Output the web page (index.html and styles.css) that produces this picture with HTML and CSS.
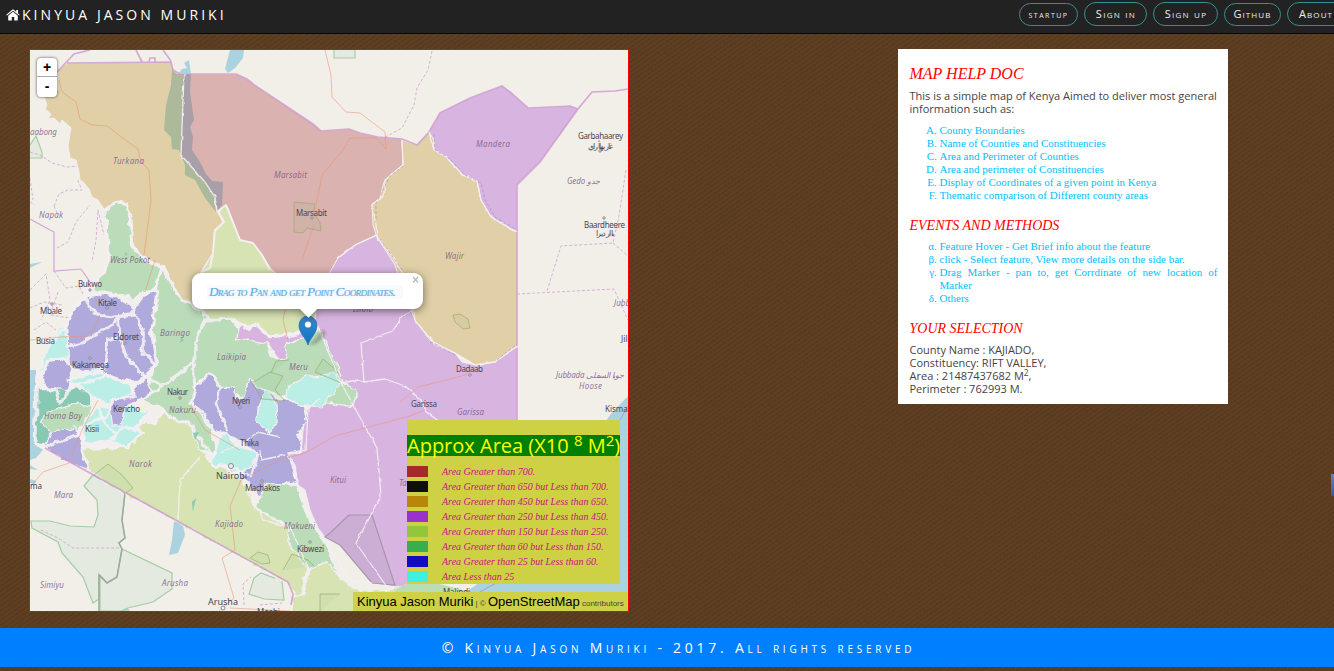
FILE: index.html
```html
<!DOCTYPE html>
<html lang="en">
<head>
<meta charset="utf-8">
<title>Kinyua Jason Muriki</title>
<link rel="stylesheet" href="styles.css">
</head>
<body>
<header class="navbar">
  <a class="brand"><svg class="home" viewBox="0 0 14 12"><path d="M7 2.8 2.2 6.8v4.1c0 .4.2.6.6.6h3V8h2.4v3.5h3c.4 0 .6-.2.6-.6V6.800z"/><path d="M13.700 5.800 12 4.400V1h-1.800v1.800L7.800.8c-.5-.4-1.100-.4-1.600 0L.3 5.800l.6.8L7 1.700l6.100 4.900z"/></svg><span>KINYUA JASON MURIKI</span></a>
  <nav class="links">
    <a class="pill startup">startup</a><a class="pill signin">Sign in</a><a class="pill signup">Sign up</a><a class="pill github">Github</a><a class="pill about">About</a>
  </nav>
</header>
<main class="content">
  <section class="map">
    <svg class="tiles" viewBox="30 50 598 561">
      <defs>
        <filter id="rough" x="-5%" y="-5%" width="110%" height="110%"><feTurbulence type="fractalNoise" baseFrequency=".11" numOctaves="3" seed="4" result="n"/><feDisplacementMap in="SourceGraphic" in2="n" scale="7" xChannelSelector="R" yChannelSelector="G"/></filter>
        <filter id="rough-line" x="-5%" y="-5%" width="110%" height="110%"><feTurbulence type="fractalNoise" baseFrequency=".14" numOctaves="2" seed="7" result="n"/><feDisplacementMap in="SourceGraphic" in2="n" scale="3" xChannelSelector="R" yChannelSelector="G"/></filter>
      </defs>
      <rect class="land" x="30" y="50" width="598" height="561"/>
      <!-- water and protected areas -->
      <g class="water">
        <path d="M179 73 182 69 187 68 184 63 189 60 191 74z M225 69 230 50H244L243 58 235 68 228 73z"/>
        <path d="M628 396 610 415 600 430 560 500 490 575 455 600 455 611H628z"/>
        <path d="M30 370 36 370 36 445 43 450 36 458 30 460z M30 264 42 262 30 268z M174 521 183 525 185 535 178 553 169 555 172 540z M30 479 36 481 35 484 30 483z M30 465 38 470 30 469z M122 611 126 606 130 611z"/>
      </g>
      <g class="reserve">
        <path d="M334 50V58H355V50"/><path d="M30 158H42V152L36 136 30 145"/>
        <path d="M93 475 84 486 97 500 98 515 94 527 70 526 50 521 31 521 32 528 58 542 62 553 83 577 93 603 99 599 99 575 107 583 117 577 122 549 119 543 125 538 122 520 125 493z"/>
        <path d="M122 549 172 573 172 589 153 602 128 608 121 611H100V575L107 583 117 577z"/>
        <path d="M254 578 261 573 282 581 284 600 264 599 249 594z"/>
        <path class="ridge" d="M125 493 122 520 125 538 119 543 122 549 117 577 107 583 99 575V611"/>
      </g>
      <!-- boundaries outside the country -->
      <g class="admin">
        <path d="M30 202 35 205M30 152 42 156 52 163 67 167 79 166M86 167 78 181 82 190 68 190 59 194 54 206M30 178 33 200M98 210 104 235M54 206 58 215M432 51 428 70 417 88 414 105 402 128 380 140M626 170 619 216 613 243 561 246 547 291M517 294 614 289 628 320M613 243 628 256"/>
        <path d="M57 248 68 242 76 222 90 205M98 212 96 240 92 262M30 290 46 274 50 300 41 320M54 271 66 288 79 286 87 302M58 292 50 315 70 318M30 308 44 302 62 305M34 330 46 322 56 330M41 530 58 538 73 548 122 548M244 605 243 584 251 577M260 605 282 603"/>
      </g>
      <path class="solid-admin" d="M30 219 54 232V271L81 269 90 282"/>
      <path class="coastline" d="M628 406 620 420M480 592 505 578"/>
      <!-- counties -->
      <g class="county">
        <path class="tan" d="M58 70 67 63 171 62 173 70 177 73 184 74 181 155 205 182 214 197 217 211 223 222 215 233 213 253 202 270 200 290 205 312 190 303 182 300 162 267 143 258 132 243 130 217 126 204 121 200 112 207 104 209 98 200 92 197 89 189 83 182 80 180 79 172 76 160 70 158 68 145 71 128 69 126 62 120 60 124 54 118 48 119 51 114 45 109 47 105 44 96 58 90z"/>
        <path class="red" d="M184 74H236L247 79 253 84 313 124 321 131 349 129 360 133 378 137 402 139 403 165 392 174 386 183 384 196 372 204 377 235 355 245 338 258 325 285 280 290 270 268 262 255 253 243 240 240 227 206 218 211 214 197 205 182 181 155z"/>
        <path class="purple" d="M377 235 390 250 401 268 412 310 430 340 455 353 462 362 475 365 495 362 517 346V540L420 590 396 587 372 583 340 545 325 537 318 528 310 510 305 490 298 485 295 465 288 454 301 453 303 430 307 410 315 400 330 397 340 382 325 350 315 320 316 295 330 272 338 258 355 245z"/>
        <path class="tan" d="M429 132 434 140V150L446 157 463 175 477 181 481 200 491 217 505 225 517 232V346L495 362 475 365 462 357 455 353 430 340 415 320 405 295 395 265 377 237 373 225 372 205 380 197 384 182 390 175 403 165 402 140 417 145 419 142z"/>
        <path class="purple" d="M429 132 440 113 470 98 502 86 510 92 528 108 550 107 570 106 578 109 567 125 540 162 517 185V232L500 223 491 217 481 200 477 181 463 175 446 157 434 150V140z"/>
        <path class="lime" d="M226 205 240 240 253 243 262 255 270 268 285 282 315 290 318 300 314 323 285 337 265 335 245 325 232 318 210 320 203 310 200 275 213 253 214 233 224 222 218 213z"/>
      </g>
      <g filter="url(#rough)">
      <g class="county west" transform="translate(20 200) scale(.33333)">
        <path class="green" d="M430 200 485 300 510 305 565 355 635 358 655 390 652 415 740 425 755 470 780 475 800 430 830 420 900 385 920 430 945 480 970 548 1010 570 1000 620 850 600 800 590 740 575 690 540 670 590 610 565 600 650 575 690 590 765 540 750 500 710 470 665 430 625 370 600 390 550 410 480 395 350 405 270z"/>
        <path class="green" d="M258 30 290 5 320 15 330 50 335 130 370 175 425 205 405 265 375 275 335 305 300 285 230 275 205 265 235 240 268 175 262 120z"/>
        <path class="indigo" d="M190 300 250 280 300 295 345 325 370 290 410 270 400 340 395 400 412 480 400 500 370 530 350 545 300 535 250 520 145 505 140 380 160 330z"/>
        <path class="indigo" d="M65 530 80 485 130 475 155 520 145 570 122 615 75 570z"/>
        <path class="cyan" d="M50 530 80 440 130 375 140 430 145 470 85 485z"/>
        <path class="cyan" d="M145 540 235 505 260 530 325 550 340 580 285 600 260 610 210 580z"/>
        <path class="teal" d="M45 570 150 565 205 570 215 615 190 680 105 705 75 730 40 730z"/>
        <path class="green" d="M75 640 140 620 180 610 220 620 170 700 100 705 65 670z"/>
        <path class="indigo" d="M70 740 90 700 170 680 185 750 205 810 150 790z"/>
        <path class="cyan" d="M190 670 235 620 270 625 340 615 380 640 345 690 365 700 325 745 270 720 190 735z"/>
        <path class="indigo" d="M270 600 325 590 350 560 380 535 400 580 345 605 310 620 300 680 280 675z"/>
        <path class="lime" d="M185 750 325 740 370 695 350 670 400 670 430 630 470 665 505 665 540 750 575 790 620 810 665 835 705 925 800 980 820 1040 865 1100 845 1185 820 1180 810 1155 210 820z"/>
        <path class="indigo" d="M525 555 570 520 590 560 640 565 645 595 670 590 690 540 740 575 780 600 850 610 860 670 830 700 850 750 805 760 835 845 800 850 710 895 690 850 660 830 715 755 620 700 575 690 540 640 515 610z"/>
        <path class="cyan" d="M735 570 770 610 775 670 745 695 710 670 715 620z"/>
        <path class="cyan" d="M805 560 860 530 945 520 965 550 900 620 840 615 800 595z"/>
        <path class="cyan" d="M575 795 595 710 620 695 650 740 715 755 690 805 640 820 620 800z"/>
        <path class="green" d="M740 850 830 860 865 960 910 1010 940 1090 965 1140 1010 1170 970 1180 865 1110 800 1020 810 980 705 925z"/>
        <path class="lime" d="M820 1185 850 1185 870 1110 920 1085 970 1140 1010 1170 1100 1170 1150 1160 1210 1240H815z"/>
        <path class="purple" d="M650 415 660 375 690 385 710 375 750 410 820 405 870 385 880 400 800 430 795 475 770 475 745 430z"/>
      </g>
      <g class="outline thick" transform="translate(20 200) scale(.33333)">
        <path d="M258 60 262 120 270 175 235 240 205 275 165 315 135 385 85 440 50 530 45 730 75 740M258 30 290 5 320 15 330 50 335 130 370 175 425 200 485 300 510 305 565 355 530 410 520 485 480 520 430 560 380 530 410 495 395 400 410 275 375 275 345 300 300 285 245 275 190 290 225 340 270 350 340 340 335 305M425 205 405 270M565 360 640 358 655 380 710 375 750 410 820 405 900 385M140 440 180 430 280 375 295 350 300 410 260 420 255 510 140 540M295 350 350 345 370 390 370 460 410 500M300 420 320 470 375 530M135 470 85 480 65 530 75 565 105 570 122 612 155 560 260 530 335 550 340 590 275 600 270 640 190 680 180 700 75 740M190 680 190 735 325 740 370 700 345 685 385 640 400 670 430 630 470 665 505 665 530 705 580 770 600 700 575 690 550 640 515 610 525 560 570 520 600 560M235 620 250 670 290 700M270 720 310 680 345 690M185 750 210 815M520 490 525 570M360 600 430 560M600 560 590 610 620 690M575 795 630 800 690 830 715 760M620 810 660 830"/>
      </g>
      </g>
      <path class="outline samburu" d="M213 253 215 230 224 222 218 211 226 205 240 240 253 243 262 255 270 270M213 253 210 268 201 272"/>
      <path class="coast" d="M395 591 405 584 440 584 470 592V611H395z"/>
      <!-- Lake Turkana -->
      <path class="lake-west" d="M172 70 177 74 184 74 181 155 205 182 214 197 216 212 205 198 195 180 185 175 185 165 179 150 172 149 171 137 164 130 166 105 171 85z"/>
      <path class="lake-east" d="M184 74H191L190 92 194 120 190 127 193 137 192 150 200 162 206 174 212 181 223 182 222 205 217 211 214 195 205 182 181 155z"/>
      <path class="park" d="M325 537 330 533 349 515 372 515 395 585 372 583 340 545z"/>
      <g class="park-line">
        <path d="M294 202 315 204 314 213 320 223 321 231 307 228 303 233 294 232zM453 315 460 314 468 319 470 328 463 329 455 322zM94 475 108 464 122 475 133 488 126 493M250 558 258 552 268 555 270 563 262 564zM315 372 323 359 337 371 341 383zM252 383 270 372 283 376 275 390 285 401 262 399zM283 570 292 554 308 560 314 566M320 611V594H340M289 360 276 361 271 373"/>
      </g>
      <!-- international border and county outlines -->
      <g class="border">
        <path d="M53 76 58 71 74 54 90 50M67 63 171 62 173 70 180 74H236L247 79 253 84 313 124 321 131 349 129 360 133 378 137 402 139 417 145 429 132 440 113 470 98 502 86 510 92 528 108 550 107 570 106 578 109 587 98 592 92 615 91 628 89M578 109 540 162 517 185V420M136 50 142 62M149 62 150 58 155 58 155 62M163 50 171 61M45 448 70 462 288 582 293 594 291 605"/>
      </g>
      <g class="outline" filter="url(#rough-line)">
        <path d="M184 74 181 155 205 182 215 197 217 211"/>
        <path d="M402 141 403 165 392 174 385 180 384 196 372 205 376 225 377 237 395 260 412 290 415 320 435 345 455 353 475 365 495 362 517 346M429 132 434 150 446 157 463 175 477 181 481 200 491 217 517 232M377 235 355 245 338 258M315 320 341 383 358 380 364 382 361 343 382 335 394 330 402 316 413 311M364 382 385 379 405 386 421 400 425 411 440 422M341 383 377 448 381 496 356 543 387 587M320 398 308 409 306 450 288 453 298 485 310 520 340 565 350 582 372 583"/>
        <path d="M260 450 261 460 285 455M220 452 240 445 258 432 280 437M200 457 180 480 178 520M253 500 263 520 290 527 308 567 303 594M256 488 255 507"/>
      </g>
      <path class="dashes" d="M434 134 435 150 451 160 466 176 481 183 485 200 495 217 515 229M403 166 390 176 376 203 376 222M380 239 402 270M430 342 455 355M497 360 517 344"/>
      <g class="roads">
        <path d="M59 80 62 92 76 102 80 119 92 125 107 126 120 136 138 149 141 162 149 170 151 200 146 240 144 255M325 50 331 75 332 97 346 112 360 113 385 132 386 149 376 138 350 138 343 150 322 175 316 205M314 225 302 260M31 486 43 472 72 462M219 611 234 598 222 558 235 550 230 506 241 480 280 460 305 453M230 608 290 611M400 402 418 387 451 379 468 374M305 453 335 436 410 416 425 410M145 292 155 260M30 340 60 337 90 336 100 315M70 460 82 430 98 400M190 405 205 430 240 450M288 340 283 320 285 310"/>
      </g>
      <g class="pools"><path d="M125 252 128 254 125 256zM181 338 184 340 180 343zM193 433 199 432 195 440zM192 502 196 498 193 512z"/></g>
      <!-- place names -->
      <g class="region">
        <text x="30" y="135" textLength="27">aabong</text><text x="113" y="164" textLength="31">Turkana</text><text x="274" y="178" textLength="33">Marsabit</text><text x="39" y="218" textLength="24">Napak</text><text x="476" y="147" textLength="34">Mandera</text><text x="567" y="184" textLength="33">Gedo جدو</text><text x="445" y="259" textLength="19">Wajir</text><text x="110" y="263" textLength="40">West Pokot</text><text x="160" y="336" textLength="30">Baringo</text><text x="217" y="360" textLength="29">Laikipia</text><text x="289" y="370" textLength="19">Meru</text><text x="353" y="312" textLength="20">Isiolo</text><text x="614" y="306">Jubb</text><text x="556" y="378" textLength="68">Jubbada جوبا السفلى</text><text x="579" y="389" textLength="23">Hoose</text><text x="457" y="415" textLength="27">Garissa</text><text x="44" y="419" textLength="38">Homa Bay</text><text x="169" y="413" textLength="27">Nakuru</text><text x="129" y="467" textLength="23">Narok</text><text x="54" y="498" textLength="19">Mara</text><text x="215" y="527" textLength="28">Kajiado</text><text x="284" y="529" textLength="31">Makueni</text><text x="40" y="588" textLength="24">Simiyu</text><text x="162" y="586" textLength="26">Arusha</text><text x="330" y="483" textLength="16">Kitui</text><text x="399" y="486">Tana</text>
      </g>
      <g class="town">
        <text x="296" y="216" textLength="31">Marsabit</text><text x="578" y="139" textLength="45">Garbahaarey</text><text x="588" y="149" textLength="25">غاربهاأراي</text><text x="584" y="228" textLength="41">Baardheere</text><text x="596" y="236" textLength="18">بااردیرا</text><text x="78" y="287" textLength="24">Bukwo</text><text x="98" y="306" textLength="19">Kitale</text><text x="40" y="314" textLength="22">Mbale</text><text x="36" y="344" textLength="19">Busia</text><text x="113" y="340" textLength="26">Eldoret</text><text x="72" y="368" textLength="37">Kakamega</text><text x="167" y="395" textLength="21">Nakur</text><text x="113" y="412" textLength="27">Kericho</text><text x="85" y="432" textLength="14">Kisii</text><text x="232" y="404" textLength="18">Nyeri</text><text x="240" y="446" textLength="19">Thika</text><text class="big" x="216" y="479" textLength="31">Nairobi</text><text x="245" y="491" textLength="35">Machakos</text><text x="297" y="552" textLength="27">Kibwezi</text><text x="456" y="372" textLength="27">Dadaab</text><text x="411" y="407" textLength="26">Garissa</text><text x="605" y="412">Kismaayo</text><text x="621" y="342">Jilib</text><text x="30" y="489">ma</text><text class="big" x="208" y="605" textLength="30">Arusha</text><text x="443" y="595" textLength="27">Malindi</text><text x="257" y="615">Moshi</text>
      </g>
      <g class="dots"><circle cx="312" cy="218" r="1.200"/><circle cx="600" cy="151" r="1.200"/><circle cx="604" cy="218" r="1.200"/><circle cx="90" cy="290" r="1.200"/><circle cx="107" cy="308" r="1.200"/><circle cx="52" cy="304" r="1.200"/><circle cx="125" cy="343" r="1.200"/><circle cx="90" cy="358" r="1.200"/><circle cx="180" cy="398" r="1.200"/><circle cx="240" cy="407" r="1.200"/><circle cx="231" cy="466" r="2.500"/><circle cx="262" cy="481" r="1.200"/><circle cx="470" cy="375" r="1.200"/><circle cx="310" cy="542" r="1.200"/><circle cx="223" cy="608" r="2"/></g>
    </svg>
    <div class="zoom"><a>+</a><a>-</a></div>
    <svg class="marker" viewBox="0 0 40 34"><defs><linearGradient id="pin" x2="0" y2="1"><stop stop-color="#398dcb"/><stop offset="1" stop-color="#126fc6"/></linearGradient></defs><path class="shade" d="M11 30 24 15Q30 15 26 22L18 29z"/><path class="pin" d="M10 30C8 23 1 18 1 10.500A9 9.500 0 0 1 19 10.500C19 18 12 23 10 30z"/><circle cx="10" cy="9.500" r="3.100" fill="#fff"/></svg>
    <div class="popup"><span class="tip"></span><div class="bubble"><p>Drag to Pan and get Point Coordinates.</p><span class="close">×</span></div></div>
    <aside class="legend">
      <h2>Approx Area (X10 <sup>8</sup> M<sup>2</sup>)</h2>
      <ul>
        <li><i class="k1"></i>Area Greater than 700.</li>
        <li><i class="k2"></i>Area Greater than 650 but Less than 700.</li>
        <li><i class="k3"></i>Area Greater than 450 but Less than 650.</li>
        <li><i class="k4"></i>Area Greater than 250 but Less than 450.</li>
        <li><i class="k5"></i>Area Greater than 150 but Less than 250.</li>
        <li><i class="k6"></i>Area Greater than 60 but Less than 150.</li>
        <li><i class="k7"></i>Area Greater than 25 but Less than 60.</li>
        <li><i class="k8"></i>Area Less than 25</li>
      </ul>
    </aside>
    <div class="attribution"><a>Kinyua Jason Muriki</a> | © <a>OpenStreetMap</a> contributors</div>
  </section>
  <section class="doc">
    <h3 class="first">MAP HELP DOC</h3>
    <p>This is a simple map of Kenya Aimed to deliver most general information such as:</p>
    <ol class="alpha"><li>County Boundaries</li><li>Name of Counties and Constituencies</li><li>Area and Perimeter of Counties</li><li>Area and perimeter of Constituencies</li><li>Display of Coordinates of a given point in Kenya</li><li>Thematic comparison of Different county areas</li></ol>
    <h3>EVENTS AND METHODS</h3>
    <ol class="greek"><li>Feature Hover - Get Brief info about the feature</li><li>click - Select feature, View more details on the side bar.</li><li>Drag Marker - pan to, get Corrdinate of new location of Marker</li><li>Others</li></ol>
    <h3>YOUR SELECTION</h3>
    <p>County Name : KAJIADO,<br>Constituency: RIFT VALLEY,<br>Area : 21487437682 M<sup>2</sup>,<br>Perimeter : 762993 M.</p>
  </section>
</main>
<footer class="footer"><span>© Kinyua Jason Muriki - 2017. All rights reserved</span></footer>
<div class="side-tab"></div>
</body>
</html>
```
FILE: styles.css
```css
* { box-sizing: border-box; }
html, body { margin: 0; height: 671px; overflow: hidden; }
body {
  font-family: "Open Sans", sans-serif;
  background: repeating-linear-gradient(145deg, rgba(0,0,0,.09) 0 1px, transparent 1px 4px), #5d3e21;
}
.navbar { height: 34px; background: #222; border-bottom: 1px solid #090909; display: flex; justify-content: space-between; overflow: hidden; color: #fff; }
.brand { display: flex; align-items: center; height: 29px; padding-left: 6px; font-size: 14px; letter-spacing: 3.050px; white-space: nowrap; }
.home { width: 14px; height: 12px; fill: #fff; margin-right: 2px; }
.links { display: flex; gap: 6px; align-items: flex-start; width: 315px; padding-top: 2px; flex: none; }
.pill { flex: none; height: 24px; border: 1px solid #35918f; border-radius: 12px; font-size: 11px; line-height: 21px; font-variant: small-caps; letter-spacing: 1.300px; color: #eee; text-align: center; white-space: nowrap; padding-left: 1px; }
.startup { width: 59px; height: 23px; margin-top: 1px; font-size: 10px; letter-spacing: 1.500px; padding-left: 0; }
.signin { width: 63px; }
.signup { width: 65px; }
.github { width: 57px; height: 23px; margin-top: 1px; line-height: 19px; letter-spacing: 1.100px; padding-left: 0; }
.about { width: 66px; text-align: left; padding-left: 11px; letter-spacing: 1.100px; }
.content { display: flex; align-items: flex-start; height: 594px; padding: 15px 0 0 29px; gap: 269px; }
.map { position: relative; width: 600px; height: 563px; border: 1px solid #f00; overflow: hidden; flex: none; }
.tiles { display: block; width: 598px; height: 561px; }
.land { fill: #f2efe9; }
.water { fill: #aad3df; }
.reserve path { fill: #e4eadf; stroke: #a5cda3; stroke-width: 1.200; }
.reserve .ridge { fill: none; stroke: #9bab9b; stroke-width: 1.500; }
.admin { fill: none; stroke: #d8b0d8; stroke-width: 1; stroke-dasharray: 3 2; }
.solid-admin { fill: none; stroke: #d3a6d3; stroke-width: 1.200; }
.coastline { fill: none; stroke: #a9a0cc; }
.county path { stroke: #f2eff2; stroke-width: 1; stroke-linejoin: round; }
.west path { stroke-width: 4; }
.tan { fill: #e0cfa7; }
.red { fill: #dab2af; }
.purple { fill: #d7b5e0; }
.lime { fill: #d7e3b3; }
.green { fill: #badcb9; }
.indigo { fill: #afaadb; }
.cyan { fill: #bbeee5; }
.teal { fill: #87c9b3; }
.coast { fill: #bcdcb4; }
.lake-west { fill: #acba9b; }
.lake-east { fill: #a89fa9; }
.park { fill: #a090a0; fill-opacity: .2; stroke: #a598a8; stroke-width: 1.200; }
.park-line { fill: #70b060; fill-opacity: .08; stroke: #91a663; stroke-opacity: .6; }
.border { fill: none; stroke: #cc92cc; stroke-opacity: .75; stroke-width: 1.700; }
.outline { fill: none; stroke: #f5f0f4; stroke-width: 1.300; stroke-opacity: .9; stroke-linejoin: round; }
.outline.thick { stroke-width: 9; }
.outline.samburu { stroke-width: 2; }
.dashes { fill: none; stroke: #a878b4; stroke-opacity: .55; stroke-width: .9; stroke-dasharray: 3 2; }
.roads { fill: none; stroke: #ec906e; stroke-width: 1; stroke-opacity: .55; stroke-linejoin: round; }
.pools { fill: #8bc9b4; }
.region { font: italic 8px "Noto Sans", sans-serif; fill: #815a86; fill-opacity: .85; }
.town { font: 8px "Noto Sans", sans-serif; fill: #4a4650; }
.town .big { font-size: 9px; }
.dots { fill: #f2efe9; stroke: #666; stroke-width: .7; }
.zoom { position: absolute; left: 7px; top: 8px; width: 20px; height: 39px; background: #fff; border-radius: 4px; box-shadow: 0 0 3px rgba(0,0,0,.7); font: bold 14px/19px "Liberation Sans", sans-serif; text-align: center; }
.zoom a { display: block; height: 18px; }
.zoom a + a { border-top: 1px solid #aaa; height: 20px; }
.marker { position: absolute; left: 268px; top: 265px; width: 40px; height: 34px; }
.pin { fill: url(#pin); stroke: #2d77a9; stroke-width: .8; }
.shade { fill: #333; opacity: .3; filter: blur(1.500px); }
.popup { position: absolute; left: 162px; top: 223px; width: 231px; height: 45px; filter: drop-shadow(0 2px 4px rgba(0,0,0,.5)); }
.bubble { position: relative; height: 36px; border-radius: 9px; background: #fff; padding: 12px 20px 0 15px; }
.bubble p { margin: 0; height: 14px; padding-left: 2px; background: #f8fafc; font: italic 13px/14px "Liberation Serif", serif; font-variant: small-caps; color: #62b3e8; text-shadow: .5px 0 1px #8ac5eb; white-space: nowrap; letter-spacing: -.54px; }
.close { position: absolute; right: 4px; top: 1px; font: bold 12px/13px "Liberation Sans", sans-serif; color: #bbb; }
.tip { position: absolute; left: 110px; top: 29px; width: 13px; height: 13px; background: #fff; transform: rotate(45deg); }
.legend { position: absolute; right: 8px; top: 370px; width: 213px; height: 164px; padding-top: 15px; background: #ced143; }
.legend h2 { margin: 0; height: 21px; background: green; color: #ff0; font-size: 20px; line-height: 22px; font-weight: 400; white-space: nowrap; }
.legend sup { font-size: 75%; line-height: 0; position: relative; top: -.5em; vertical-align: baseline; }
.legend ul { margin: 8px 0 0; padding: 0; list-style: none; font: italic 10px/15px "Liberation Serif", serif; color: #c71585; }
.legend li { display: flex; align-items: center; height: 15px; gap: 14px; white-space: nowrap; }
.legend i { width: 21px; height: 11px; }
.k1 { background: #a52a2a; } .k2 { background: #0f0f0d; } .k3 { background: #b8860b; } .k4 { background: #9932cc; }
.k5 { background: #94c63c; } .k6 { background: #38ae4c; } .k7 { background: #120bc0; } .k8 { background: #41efe2; }
.attribution { position: absolute; right: 0; bottom: 0; width: 275px; height: 19px; padding-left: 4px; background: #ced143; font: 8px/19px "Liberation Sans", sans-serif; color: #444; white-space: nowrap; }
.attribution a { font-size: 13px; color: #000; }
.doc { width: 330px; height: 355px; background: #fff; padding: 16px 10.500px 0 11.500px; font-size: 11px; line-height: 13px; color: #444; }
.doc h3 { margin: 16px 0 6px; height: 16px; font: italic 14px/16px "Liberation Serif", serif; color: #f00; }
.doc h3.first { margin: 0 0 6px; height: 18px; font-size: 16px; line-height: 18px; }
.doc p { margin: 0; }
.doc sup { font-size: 75%; line-height: 0; vertical-align: baseline; position: relative; top: -.5em; }
.doc ol { margin: 9px 0 0; padding-left: 30px; font-family: "Liberation Serif", serif; color: #00bfff; text-align: justify; }
.doc .greek { margin-top: 5px; list-style: lower-greek; }
.doc .alpha { list-style: upper-alpha; }
.footer { height: 39px; background: #0080ff; color: #fff; text-align: center; font-size: 14px; line-height: 40px; font-variant: small-caps; letter-spacing: 3.760px; padding-left: 23px; white-space: nowrap; }
.side-tab { position: absolute; right: 0; top: 474px; width: 3px; height: 22px; background: linear-gradient(#6485be, #3b5998); }
```
